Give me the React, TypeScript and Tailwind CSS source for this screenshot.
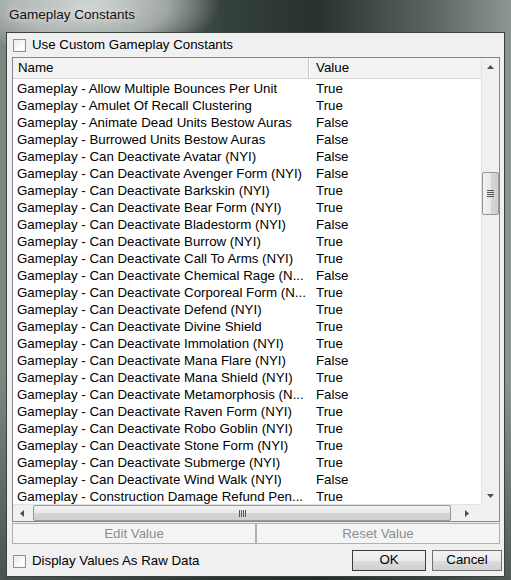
import type { ReactNode } from "react";

const rows: Array<[string, string]> = [
  ["Gameplay - Allow Multiple Bounces Per Unit", "True"],
  ["Gameplay - Amulet Of Recall Clustering", "True"],
  ["Gameplay - Animate Dead Units Bestow Auras", "False"],
  ["Gameplay - Burrowed Units Bestow Auras", "False"],
  ["Gameplay - Can Deactivate Avatar (NYI)", "False"],
  ["Gameplay - Can Deactivate Avenger Form (NYI)", "False"],
  ["Gameplay - Can Deactivate Barkskin (NYI)", "True"],
  ["Gameplay - Can Deactivate Bear Form (NYI)", "True"],
  ["Gameplay - Can Deactivate Bladestorm (NYI)", "False"],
  ["Gameplay - Can Deactivate Burrow (NYI)", "True"],
  ["Gameplay - Can Deactivate Call To Arms (NYI)", "True"],
  ["Gameplay - Can Deactivate Chemical Rage (N...", "False"],
  ["Gameplay - Can Deactivate Corporeal Form (N...", "True"],
  ["Gameplay - Can Deactivate Defend (NYI)", "True"],
  ["Gameplay - Can Deactivate Divine Shield", "True"],
  ["Gameplay - Can Deactivate Immolation (NYI)", "True"],
  ["Gameplay - Can Deactivate Mana Flare (NYI)", "False"],
  ["Gameplay - Can Deactivate Mana Shield (NYI)", "True"],
  ["Gameplay - Can Deactivate Metamorphosis (N...", "False"],
  ["Gameplay - Can Deactivate Raven Form (NYI)", "True"],
  ["Gameplay - Can Deactivate Robo Goblin (NYI)", "True"],
  ["Gameplay - Can Deactivate Stone Form (NYI)", "True"],
  ["Gameplay - Can Deactivate Submerge (NYI)", "True"],
  ["Gameplay - Can Deactivate Wind Walk (NYI)", "False"],
  ["Gameplay - Construction Damage Refund Pen...", "True"],
];

function CheckBox() {
  return (
    <span className="block h-[13px] w-[13px] shrink-0 border border-[#8e8f8f] bg-[linear-gradient(135deg,#e6e6e6,#ffffff_70%)] shadow-[inset_0_0_0_1px_#f4f4f4]" />
  );
}

function Arrow({ dir }: { dir: "up" | "down" | "left" | "right" }) {
  const points = {
    up: "0,4 3.5,0 7,4",
    down: "0,0 7,0 3.5,4",
    left: "4,0 4,7 0,3.5",
    right: "0,0 4,3.5 0,7",
  }[dir];
  const vertical = dir === "up" || dir === "down";
  return (
    <svg width={vertical ? 7 : 4} height={vertical ? 4 : 7} viewBox={vertical ? "0 0 7 4" : "0 0 4 7"}>
      <polygon points={points} fill="#505050" />
    </svg>
  );
}

function Button({ children, disabled, strong, className }: { children: ReactNode; disabled?: boolean; strong?: boolean; className: string }) {
  return (
    <div
      className={
        disabled
          ? `flex items-center justify-center border border-[#adb2b5] bg-[#f4f4f4] text-[#8d8d8d] ${className}`
          : `flex items-center justify-center border bg-[linear-gradient(#f2f2f2,#ebebeb_50%,#dddddd_51%,#cfcfcf)] text-black ${strong ? "border-[#3c3c3c]" : "border-[#707070]"} ${className}`
      }
    >
      {children}
    </div>
  );
}

export default function App() {
  return (
    <div className="relative h-[580px] w-[511px] overflow-hidden bg-[linear-gradient(90deg,#7d8782_0%,#59635f_25%,#34403b_45%,#27322d_62%,#5d6762_85%,#8e9692_100%)] font-['Liberation_Sans',Arial,sans-serif] text-[13.3px] text-black">
      <div className="pointer-events-none absolute -left-[40px] -top-[50px] h-[110px] w-[260px] rounded-full bg-[radial-gradient(closest-side,rgba(215,220,218,0.95),rgba(215,220,218,0.6)_60%,rgba(215,220,218,0))]" />
      <div className="pointer-events-none absolute bottom-0 left-0 right-0 h-[200px] bg-[linear-gradient(rgba(30,40,36,0),rgba(30,40,36,0.55))]" />

      <div className="relative flex h-[32px] items-center pb-[2px] pl-[9px] text-[13.5px] text-[#111] [text-shadow:0_0_6px_rgba(255,255,255,0.9)]">
        Gameplay Constants
      </div>

      <div className="relative ml-[6px] flex h-[545px] w-[499px] flex-col border border-[#3a423e] bg-[#f0f0f0] pl-[5px] pr-[4px]">
        <div className="flex h-[24px] items-center gap-[6px] pl-[1px]">
          <CheckBox />
          <span>Use Custom Gameplay Constants</span>
        </div>

        <div className="flex h-[465px] w-[488px] flex-col border border-[#828790] bg-white">
          <div className="flex h-[446px]">
            <div className="flex w-[468px] flex-col overflow-hidden">
              <div className="flex h-[21px] shrink-0 border-b border-[#d5d5d5] bg-[#f3f3f3]">
                <div className="flex w-[296px] items-center border-r border-[#c7c7c7] pl-[5px]">Name</div>
                <div className="flex flex-1 items-center border-l border-white pl-[6px]">Value</div>
              </div>
              <div className="mt-[1px]">
                {rows.map(([name, value]) => (
                  <div key={name} className="flex h-[17px] items-center whitespace-nowrap leading-[17px]">
                    <div className="w-[296px] overflow-hidden pl-[4px]">{name}</div>
                    <div className="pl-[7px]">{value}</div>
                  </div>
                ))}
              </div>
            </div>
            <div className="flex w-[18px] flex-col border-l border-[#e3e3e3] bg-[#f0f0f0]">
              <div className="flex h-[17px] items-center justify-center pr-[1px]">
                <Arrow dir="up" />
              </div>
              <div className="h-[97px]" />
              <div className="flex h-[43px] w-[17px] items-center justify-center rounded-[2px] border border-[#979797] bg-[linear-gradient(90deg,#f3f3f3,#e8e8e8_50%,#d6d6d6_51%,#cfcfcf)]">
                <div className="flex flex-col gap-[1px]">
                  <span className="block h-[1px] w-[7px] bg-[#555]" />
                  <span className="block h-[1px] w-[7px] bg-[#555]" />
                  <span className="block h-[1px] w-[7px] bg-[#555]" />
                  <span className="block h-[1px] w-[7px] bg-[#555]" />
                </div>
              </div>
              <div className="flex-1" />
              <div className="flex h-[17px] items-center justify-center pr-[1px]">
                <Arrow dir="down" />
              </div>
            </div>
          </div>
          <div className="flex h-[17px]">
            <div className="flex w-[468px] items-center border-t border-[#e3e3e3] bg-[#f0f0f0]">
              <div className="flex h-full w-[17px] items-center justify-center">
                <Arrow dir="left" />
              </div>
              <div className="w-[3px]" />
              <div className="flex h-[16px] w-[418px] items-center justify-center rounded-[2px] border border-[#979797] bg-[linear-gradient(#f3f3f3,#e8e8e8_50%,#d6d6d6_51%,#cfcfcf)]">
                <div className="flex gap-[1px]">
                  <span className="block h-[7px] w-[1px] bg-[#555]" />
                  <span className="block h-[7px] w-[1px] bg-[#555]" />
                  <span className="block h-[7px] w-[1px] bg-[#555]" />
                  <span className="block h-[7px] w-[1px] bg-[#555]" />
                </div>
              </div>
              <div className="flex h-full flex-1 items-center pl-[14px]">
                <Arrow dir="right" />
              </div>
            </div>
            <div className="w-[18px] bg-[#f0f0f0]" />
          </div>
        </div>

        <div className="mt-[1px] flex h-[21px] w-[488px]">
          <Button disabled className="w-[244px]">Edit Value</Button>
          <Button disabled className="flex-1">Reset Value</Button>
        </div>

        <div className="-mr-[2px] flex flex-1 items-center">
          <div className="flex items-center gap-[6px] pl-[1px] pt-[2px]">
            <CheckBox />
            <span>Display Values As Raw Data</span>
          </div>
          <div className="flex-1" />
          <Button strong className="h-[21px] w-[74px]">OK</Button>
          <div className="w-[6px]" />
          <Button className="h-[21px] w-[70px]">Cancel</Button>
        </div>
      </div>
    </div>
  );
}
